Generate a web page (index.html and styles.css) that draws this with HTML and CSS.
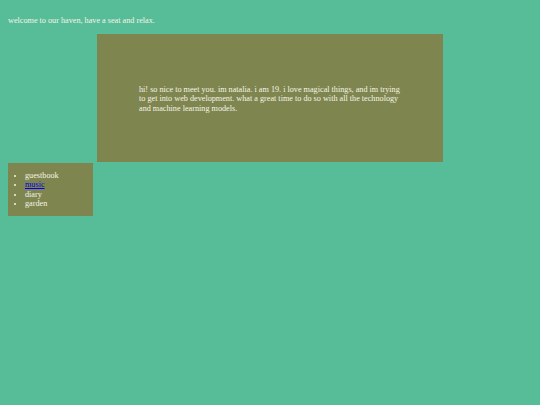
FILE: index.html
```html
<!DOCTYPE html>
<html>
<head>
<meta charset="utf-8">
<link rel="stylesheet" href="styles.css">
</head>
<body>
<p class="welcome">welcome to our haven, have a seat and relax.</p>
<div class="intro">
  <p class="intro-text">hi! so nice to meet you. im natalia. i am 19. i love magical things, and im trying to get into web development. what a great time to do so with all the technology and machine learning models.</p>
</div>
<nav class="menu">
  <ul class="menu-list">
    <li>guestbook</li>
    <li><a href="#" class="menu-link">music</a></li>
    <li>diary</li>
    <li>garden</li>
  </ul>
</nav>
</body>
</html>
```
FILE: styles.css
```css
html, body {
  background: #57bd99;
}
body {
  margin: 8px;
  font-family: "Liberation Serif", "Times New Roman", serif;
  font-size: 8.2px;
  line-height: 9.2px;
  color: #f4f4e6;
}
.welcome {
  margin: 8px 0 9px;
}
.intro {
  margin-left: 89px;
  width: 346px;
  height: 128px;
  background: #7f854f;
  box-sizing: border-box;
  padding: 51px 0 0 42px;
}
.intro-text {
  margin: 0;
  width: 262px;
}
.menu {
  width: 85px;
  margin-top: 1px;
  background: #7f854f;
  box-sizing: border-box;
  padding: 8px 0 8px 0;
}
.menu-list {
  margin: 0;
  padding-left: 17px;
}
.menu-link {
  color: #0000ee;
}
```
